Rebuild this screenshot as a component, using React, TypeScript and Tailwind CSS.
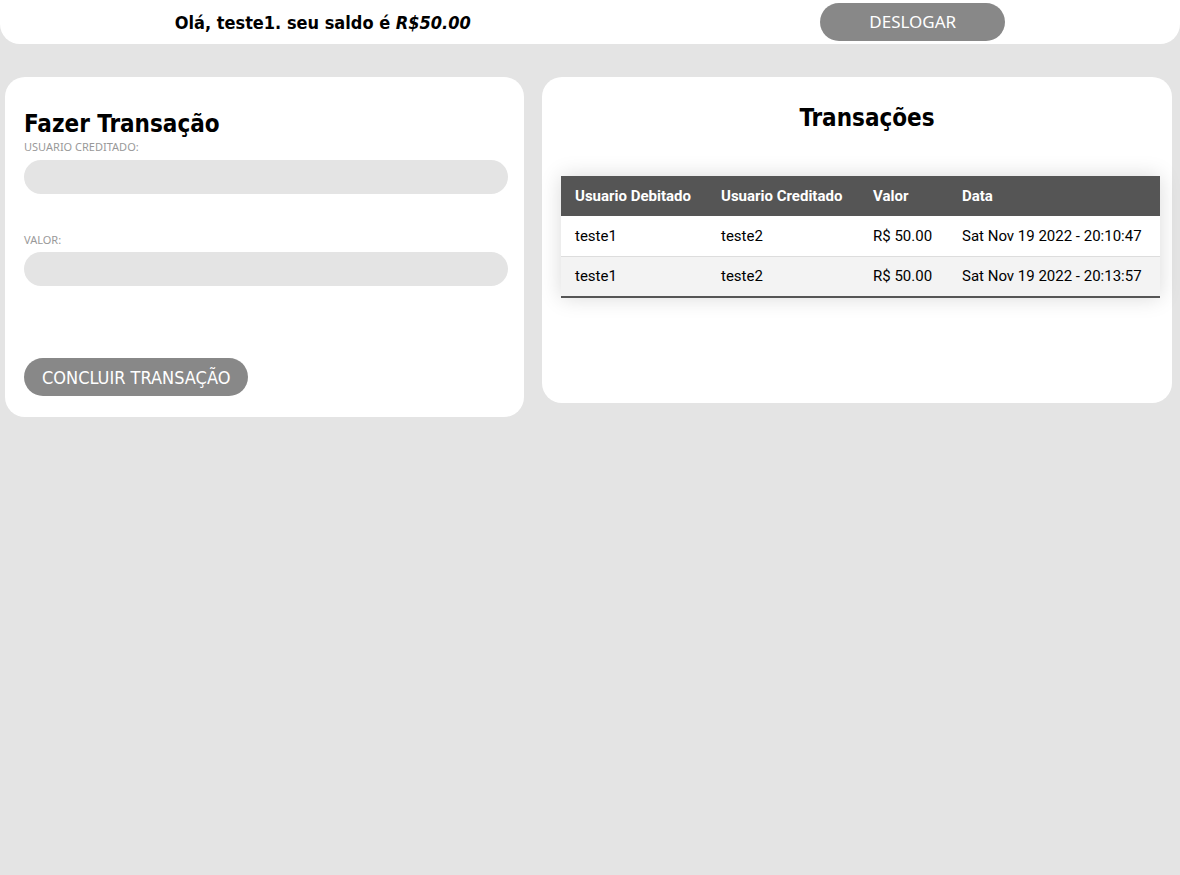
import React from 'react';

const transacoes = [
  { debitado: 'teste1', creditado: 'teste2', valor: 'R$ 50.00', data: 'Sat Nov 19 2022 - 20:10:47' },
  { debitado: 'teste1', creditado: 'teste2', valor: 'R$ 50.00', data: 'Sat Nov 19 2022 - 20:13:57' },
];

export default function App() {
  return (
    <div className="min-h-screen bg-[#e4e4e4] font-['Noto_Sans',sans-serif]">
      {/* Header */}
      <header className="h-[44px] bg-white rounded-b-[20px] flex items-center justify-around">
        <h3 className="text-[18px] font-bold text-black font-['DejaVu_Sans_Condensed','DejaVu_Sans',sans-serif]">
          Olá, teste1. seu saldo é <i>R$50.00</i>
        </h3>
        <button className="w-[185px] h-[38px] rounded-full bg-[#888888] text-white text-[17px] cursor-pointer">
          DESLOGAR
        </button>
      </header>

      <main className="flex items-start gap-[18px] pl-[5px] pt-[33px]">
        {/* Fazer Transação */}
        <section className="w-[519px] h-[340px] bg-white rounded-[20px] pl-[19px] pr-[16px] pt-[32px] flex flex-col">
          <h2 className="text-[24px] leading-[30px] font-bold text-black font-['DejaVu_Sans_Condensed','DejaVu_Sans',sans-serif]">
            Fazer Transação
          </h2>
          <label className="text-[11px] leading-[14px] text-[#999] mt-[1px]">USUARIO CREDITADO:</label>
          <input className="mt-[6px] h-[34px] w-full rounded-full bg-[#e4e4e4] outline-none px-4" />
          <label className="text-[11px] leading-[14px] text-[#999] mt-[39px]">VALOR:</label>
          <input className="mt-[5px] h-[34px] w-full rounded-full bg-[#e4e4e4] outline-none px-4" />
          <button className="mt-[72px] self-start h-[38px] px-[18px] rounded-full bg-[#888888] text-white text-[18px] font-['DejaVu_Sans_Condensed','DejaVu_Sans',sans-serif] cursor-pointer">
            CONCLUIR TRANSAÇÃO
          </button>
        </section>

        {/* Transações */}
        <section className="w-[630px] h-[326px] bg-white rounded-[20px] pt-[26px]">
          <h2 className="text-center pl-[20px] text-[24px] leading-[30px] font-bold text-black font-['DejaVu_Sans_Condensed','DejaVu_Sans',sans-serif]">
            Transações
          </h2>
          <table className="mt-[43px] ml-[19px] w-[599px] border-collapse text-left font-['Roboto',sans-serif] text-[15px] shadow-[0_0_20px_rgba(0,0,0,0.15)] border-b-2 border-[#555]">
            <thead>
              <tr className="bg-[#555555] text-white h-[40px]">
                <th className="pl-[14px] font-bold text-[15px]">Usuario Debitado</th>
                <th className="pl-[14px] font-bold text-[15px]">Usuario Creditado</th>
                <th className="pl-[14px] font-bold text-[15px]">Valor</th>
                <th className="pl-[14px] font-bold text-[15px]">Data</th>
              </tr>
            </thead>
            <tbody>
              {transacoes.map((t, i) => (
                <tr key={i} className={`text-black ${i % 2 === 1 ? 'h-[41px] bg-[#f3f3f3]' : 'h-[40px] bg-white border-b border-[#dddddd]'}`}>
                  <td className="pl-[14px] w-[146px]">{t.debitado}</td>
                  <td className="pl-[14px] w-[152px]">{t.creditado}</td>
                  <td className="pl-[14px] w-[89px]">{t.valor}</td>
                  <td className="pl-[14px]">{t.data}</td>
                </tr>
              ))}
            </tbody>
          </table>
        </section>
      </main>
    </div>
  );
}
